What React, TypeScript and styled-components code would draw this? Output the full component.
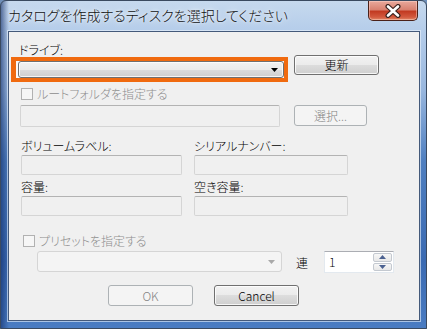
import React from 'react';
import styled, { createGlobalStyle, css } from 'styled-components';

const GlobalStyle = createGlobalStyle`
  html, body {
    margin: 0;
    padding: 0;
    width: 427px;
    height: 329px;
    overflow: hidden;
    background: #6f8fb8;
  }
  * {
    box-sizing: border-box;
  }
`;

const uiFont = css`
  font-family: 'Noto Sans CJK JP', 'Noto Sans', sans-serif;
  font-size: 12px;
  font-weight: 300;
  line-height: 14px;
  font-feature-settings: 'palt';
`;

const Window = styled.div`
  width: 427px;
  height: 329px;
  display: flex;
  flex-direction: column;
  border: 1px solid #3a4a60;
  border-radius: 6px 6px 0 0;
  background:
    linear-gradient(90deg, rgba(16, 44, 104, 0.6) 0, rgba(16, 44, 104, 0) 8px),
    linear-gradient(180deg, #c6d9ee 0, #b5cdea 30px, #97b6de 90px, #4f7fc0 160px, #3a6ab2 260px, #4a7cc2 100%);
  overflow: hidden;
`;

const TitleBar = styled.div`
  height: 30px;
  display: flex;
  align-items: flex-start;
  flex-shrink: 0;
`;

const Title = styled.div`
  ${uiFont};
  font-size: 14px;
  line-height: 18px;
  padding: 5px 0 0 7px;
  color: #111;
  text-shadow: 0 0 8px rgba(255, 255, 255, 0.95), 0 0 3px rgba(255, 255, 255, 0.9);
`;

const CloseButton = styled.div`
  margin-left: auto;
  margin-right: 8px;
  width: 50px;
  height: 20px;
  display: flex;
  align-items: center;
  justify-content: center;
  border: 1px solid #4a2119;
  border-top: none;
  border-radius: 0 0 5px 5px;
  background: linear-gradient(180deg, #e9a99c 0, #d98271 45%, #c23b22 55%, #d35a3f 85%, #e08a68 100%);
  box-shadow: inset 0 0 0 1px rgba(255, 220, 210, 0.45);
`;

const Client = styled.div`
  flex: 1;
  margin: 0 6px 7px 7px;
  border: 1px solid #44597a;
  background: #f0f0f0;
  box-shadow: 0 0 0 1px rgba(235, 243, 252, 0.6);
  display: flex;
  flex-direction: column;
`;

const Row = styled.div<{ $top: number; $left: number; $gap?: number }>`
  display: flex;
  align-items: flex-start;
  margin-top: ${p => p.$top}px;
  padding-left: ${p => p.$left}px;
  gap: ${p => p.$gap ?? 0}px;
`;

const Label = styled.div<{ $disabled?: boolean }>`
  ${uiFont};
  color: ${p => (p.$disabled ? '#8d8d8d' : '#000')};
  white-space: nowrap;
`;

const Highlight = styled.div`
  margin-top: 2px;
  width: 277px;
  height: 25px;
  border: 4px solid #f06a0f;
  border-left-width: 5px;
  background: #fafafa;
  display: flex;
  padding: 0 0 0 2px;
`;

const glass = css`
  border: 1px solid #707070;
  border-radius: 3px;
  background: linear-gradient(180deg, #f2f2f2 0, #ebebeb 50%, #dddddd 50%, #cfcfcf 100%);
  box-shadow: inset 0 0 0 1px rgba(255, 255, 255, 0.8);
`;

const ComboBox = styled.div`
  ${glass};
  flex: 1;
  height: 17px;
  display: flex;
  align-items: center;
  justify-content: flex-end;
  padding-right: 5px;
`;

const Button = styled.div<{ $width: number; $height?: number; $disabled?: boolean }>`
  ${uiFont};
  width: ${p => p.$width}px;
  height: ${p => p.$height ?? 21}px;
  display: flex;
  align-items: center;
  justify-content: center;
  ${glass};
  color: #000;
  ${p =>
    p.$disabled &&
    css`
      border-color: #adb2b5;
      background: #f4f4f4;
      box-shadow: none;
      color: #838383;
    `}
`;

const CheckRow = styled.div`
  display: flex;
  align-items: center;
  gap: 4px;
`;

const CheckBox = styled.div`
  width: 12px;
  height: 12px;
  border: 1px solid #b1b1b1;
  background: #f6f6f6;
`;

const Field = styled.div<{ $width: number; $height?: number }>`
  width: ${p => p.$width}px;
  height: ${p => p.$height ?? 20}px;
  border: 1px solid #d5d5d5;
  border-top-color: #b3b3b3;
  border-radius: 2px;
  background: #f0f0f0;
`;

const Columns = styled.div`
  display: grid;
  grid-template-columns: 161px 154px;
  column-gap: 12px;
  margin-top: 12px;
  padding-left: 12px;
`;

const Group = styled.div<{ $top?: number }>`
  display: flex;
  flex-direction: column;
  gap: 2px;
  margin-top: ${p => p.$top ?? 0}px;
`;

const DisabledCombo = styled.div`
  width: 245px;
  height: 21px;
  border: 1px solid #d5d5d5;
  border-radius: 3px;
  background: #f4f4f4;
  display: flex;
  align-items: center;
  justify-content: flex-end;
  padding-right: 6px;
`;

const RenLabel = styled(Label)`
  margin-top: 5px;
  width: 14px;
`;

const Spin = styled.div`
  width: 70px;
  height: 22px;
  display: flex;
  border: 1px solid #e3e9ef;
  border-top-color: #abadb3;
  background: #fff;
`;

const SpinValue = styled.div`
  ${uiFont};
  flex: 1;
  padding: 3px 0 0 4px;
  color: #000;
`;

const SpinButtons = styled.div`
  width: 20px;
  display: flex;
  flex-direction: column;
  gap: 1px;
  padding: 1px 1px 1px 0;
`;

const SpinArrow = styled.div`
  flex: 1;
  display: flex;
  align-items: center;
  justify-content: center;
  border: 1px solid #c4c9d0;
  border-radius: 2px;
  background: linear-gradient(180deg, #f7f7f7 0, #e8e8e8 100%);
`;

const Triangle = ({ color, up }: { color: string; up?: boolean }) => (
  <svg width="7" height="4" viewBox="0 0 7 4">
    <path d={up ? 'M0 4 L3.5 0 L7 4 Z' : 'M0 0 L7 0 L3.5 4 Z'} fill={color} />
  </svg>
);

const CloseGlyph = () => (
  <svg width="18" height="14" viewBox="0 0 18 14">
    <path d="M4 2.5 L14 11.5 M14 2.5 L4 11.5" stroke="#3b2420" strokeWidth="5" strokeLinecap="round" />
    <path d="M4 2.5 L14 11.5 M14 2.5 L4 11.5" stroke="#fff" strokeWidth="2.6" strokeLinecap="round" />
  </svg>
);

const App = () => (
  <>
    <GlobalStyle />
    <Window>
      <TitleBar>
        <Title>カタログを作成するディスクを選択してください</Title>
        <CloseButton>
          <CloseGlyph />
        </CloseButton>
      </TitleBar>
      <Client>
        <Row $top={11} $left={10}>
          <Label>ドライブ:</Label>
        </Row>
        <Row $top={-2} $left={2} $gap={6}>
          <Highlight>
            <ComboBox>
              <Triangle color="#000" />
            </ComboBox>
          </Highlight>
          <Button $width={85} $height={20}>更新</Button>
        </Row>
        <Row $top={5} $left={12}>
          <CheckRow>
            <CheckBox />
            <Label $disabled>ルートフォルダを指定する</Label>
          </CheckRow>
        </Row>
        <Row $top={4} $left={11} $gap={14}>
          <Field $width={260} $height={22} />
          <Button $width={73} $disabled>選択...</Button>
        </Row>
        <Columns>
          <Group>
            <Label>ボリュームラベル:</Label>
            <Field $width={161} />
          </Group>
          <Group>
            <Label>シリアルナンバー:</Label>
            <Field $width={154} />
          </Group>
          <Group $top={5}>
            <Label>容量:</Label>
            <Field $width={161} />
          </Group>
          <Group $top={5}>
            <Label>空き容量:</Label>
            <Field $width={154} />
          </Group>
        </Columns>
        <Row $top={18} $left={14}>
          <CheckRow>
            <CheckBox />
            <Label $disabled>プリセットを指定する</Label>
          </CheckRow>
        </Row>
        <Row $top={3} $left={28} $gap={14}>
          <DisabledCombo>
            <Triangle color="#a8a8a8" />
          </DisabledCombo>
          <RenLabel>連</RenLabel>
          <Spin>
            <SpinValue>1</SpinValue>
            <SpinButtons>
              <SpinArrow>
                <Triangle color="#4b6190" up />
              </SpinArrow>
              <SpinArrow>
                <Triangle color="#4b6190" />
              </SpinArrow>
            </SpinButtons>
          </Spin>
        </Row>
        <Row $top={12} $left={99} $gap={21}>
          <Button $width={85} $disabled>OK</Button>
          <Button $width={85}>Cancel</Button>
        </Row>
      </Client>
    </Window>
  </>
);

export default App;
